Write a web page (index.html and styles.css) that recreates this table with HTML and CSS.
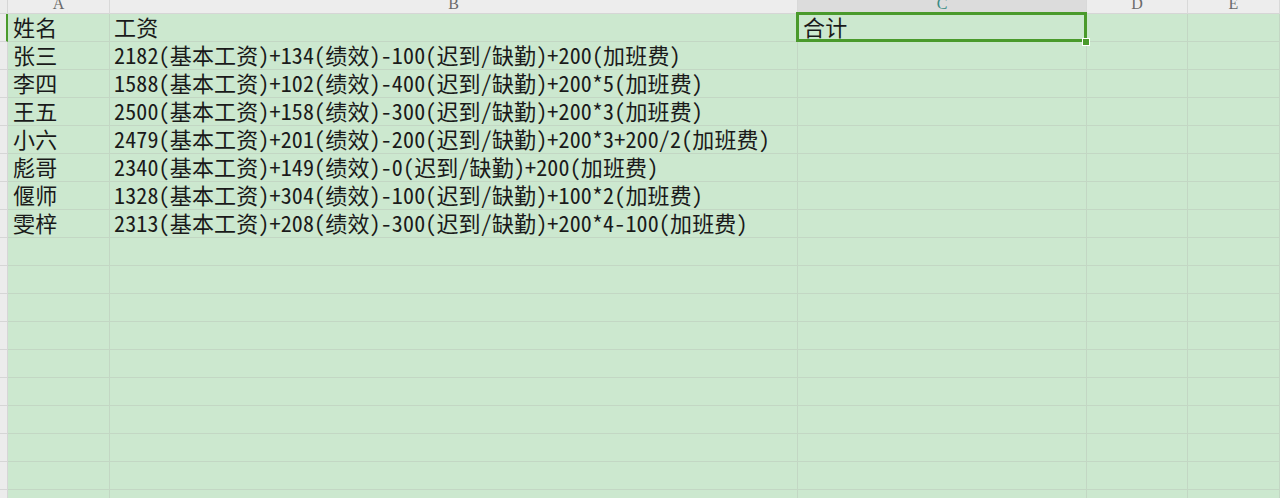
FILE: index.html
```html
<!DOCTYPE html>
<html lang="zh-CN">
<head>
<meta charset="utf-8">
<title>工资表</title>
<link rel="stylesheet" href="styles.css">
</head>
<body>
<div class="sheet">
  <div class="row head">
    <div class="rh"></div>
    <div class="ch col-a"><span>A</span></div>
    <div class="ch col-b"><span>B</span></div>
    <div class="ch col-c active"><span>C</span></div>
    <div class="ch col-d"><span>D</span></div>
    <div class="ch col-e"><span>E</span></div>
  </div>
  <div class="row">
    <div class="rh sel"></div>
    <div class="cell col-a">姓名</div>
    <div class="cell col-b">工资</div>
    <div class="cell col-c current">合计<i class="box"></i><i class="handle"></i></div>
    <div class="cell col-d"></div>
    <div class="cell col-e"></div>
  </div>
  <div class="row"><div class="rh"></div><div class="cell col-a">张三</div><div class="cell col-b">2182(基本工资)+134(绩效)-100(迟到/缺勤)+200(加班费)</div><div class="cell col-c"></div><div class="cell col-d"></div><div class="cell col-e"></div></div>
  <div class="row"><div class="rh"></div><div class="cell col-a">李四</div><div class="cell col-b">1588(基本工资)+102(绩效)-400(迟到/缺勤)+200*5(加班费)</div><div class="cell col-c"></div><div class="cell col-d"></div><div class="cell col-e"></div></div>
  <div class="row"><div class="rh"></div><div class="cell col-a">王五</div><div class="cell col-b">2500(基本工资)+158(绩效)-300(迟到/缺勤)+200*3(加班费)</div><div class="cell col-c"></div><div class="cell col-d"></div><div class="cell col-e"></div></div>
  <div class="row"><div class="rh"></div><div class="cell col-a">小六</div><div class="cell col-b">2479(基本工资)+201(绩效)-200(迟到/缺勤)+200*3+200/2(加班费)</div><div class="cell col-c"></div><div class="cell col-d"></div><div class="cell col-e"></div></div>
  <div class="row"><div class="rh"></div><div class="cell col-a">彪哥</div><div class="cell col-b">2340(基本工资)+149(绩效)-0(迟到/缺勤)+200(加班费)</div><div class="cell col-c"></div><div class="cell col-d"></div><div class="cell col-e"></div></div>
  <div class="row"><div class="rh"></div><div class="cell col-a">偃师</div><div class="cell col-b">1328(基本工资)+304(绩效)-100(迟到/缺勤)+100*2(加班费)</div><div class="cell col-c"></div><div class="cell col-d"></div><div class="cell col-e"></div></div>
  <div class="row"><div class="rh"></div><div class="cell col-a">雯梓</div><div class="cell col-b">2313(基本工资)+208(绩效)-300(迟到/缺勤)+200*4-100(加班费)</div><div class="cell col-c"></div><div class="cell col-d"></div><div class="cell col-e"></div></div>
  <div class="row"><div class="rh"></div><div class="cell col-a"></div><div class="cell col-b"></div><div class="cell col-c"></div><div class="cell col-d"></div><div class="cell col-e"></div></div>
  <div class="row"><div class="rh"></div><div class="cell col-a"></div><div class="cell col-b"></div><div class="cell col-c"></div><div class="cell col-d"></div><div class="cell col-e"></div></div>
  <div class="row"><div class="rh"></div><div class="cell col-a"></div><div class="cell col-b"></div><div class="cell col-c"></div><div class="cell col-d"></div><div class="cell col-e"></div></div>
  <div class="row"><div class="rh"></div><div class="cell col-a"></div><div class="cell col-b"></div><div class="cell col-c"></div><div class="cell col-d"></div><div class="cell col-e"></div></div>
  <div class="row"><div class="rh"></div><div class="cell col-a"></div><div class="cell col-b"></div><div class="cell col-c"></div><div class="cell col-d"></div><div class="cell col-e"></div></div>
  <div class="row"><div class="rh"></div><div class="cell col-a"></div><div class="cell col-b"></div><div class="cell col-c"></div><div class="cell col-d"></div><div class="cell col-e"></div></div>
  <div class="row"><div class="rh"></div><div class="cell col-a"></div><div class="cell col-b"></div><div class="cell col-c"></div><div class="cell col-d"></div><div class="cell col-e"></div></div>
  <div class="row"><div class="rh"></div><div class="cell col-a"></div><div class="cell col-b"></div><div class="cell col-c"></div><div class="cell col-d"></div><div class="cell col-e"></div></div>
  <div class="row"><div class="rh"></div><div class="cell col-a"></div><div class="cell col-b"></div><div class="cell col-c"></div><div class="cell col-d"></div><div class="cell col-e"></div></div>
  <div class="row"><div class="rh"></div><div class="cell col-a"></div><div class="cell col-b"></div><div class="cell col-c"></div><div class="cell col-d"></div><div class="cell col-e"></div></div>
</div>
</body>
</html>
```
FILE: styles.css
```css
html, body {
  margin: 0;
  padding: 0;
  background: #cce8cf;
  overflow: hidden;
}
.sheet {
  width: 1280px;
  height: 498px;
  overflow: hidden;
  font-family: "Noto Sans CJK SC", sans-serif;
  font-feature-settings: "hwid" 1;
  font-size: 22px;
  letter-spacing: 0.15px;
  color: #1a1a1a;
}
.row {
  display: flex;
  height: 28px;
}
.row.head {
  height: 14px;
}
.rh {
  flex: 0 0 8px;
  box-sizing: border-box;
  background: #ececec;
  border-bottom: 1px solid #d6d6d6;
  border-right: 1px solid #d6d6d6;
}
.rh.sel {
  border-right: 2px solid #4a9a2c;
}
.col-a { flex: 0 0 102px; }
.col-b { flex: 0 0 688px; }
.col-c { flex: 0 0 289px; }
.col-d { flex: 0 0 101px; }
.col-e { flex: 1 1 auto; }
.ch {
  box-sizing: border-box;
  background: #ededed;
  border-right: 1px solid #d9d9d9;
  border-bottom: 1px solid #d6d6d6;
  overflow: hidden;
  display: flex;
  justify-content: center;
  align-items: flex-end;
  font-family: "Liberation Serif", serif;
  font-feature-settings: normal;
  letter-spacing: 0;
  font-size: 16px;
  color: #6a6a6a;
  line-height: 1;
}
.ch span {
  display: block;
  margin-bottom: 1px;
}
.ch.active {
  background: #dcdcdc;
  color: #3b8c84;
}
.cell {
  box-sizing: border-box;
  position: relative;
  border-right: 1px solid #c3d7c4;
  border-bottom: 1px solid #c3d7c4;
  padding-left: 4px;
  display: flex;
  align-items: flex-end;
  line-height: 1;
  padding-bottom: 4px;
  white-space: nowrap;
}
.cell.col-a { padding-left: 5px; }
.cell.col-c { padding-left: 5px; }
.box {
  position: absolute;
  left: -2px;
  top: -2px;
  right: -1px;
  bottom: -1px;
  border: 3px solid #4a9a2c;
  z-index: 2;
}
.handle {
  position: absolute;
  right: -3px;
  bottom: -4px;
  width: 6px;
  height: 6px;
  background: #4a9a2c;
  box-shadow: 0 0 0 1px #ffffff;
  z-index: 3;
}
```
